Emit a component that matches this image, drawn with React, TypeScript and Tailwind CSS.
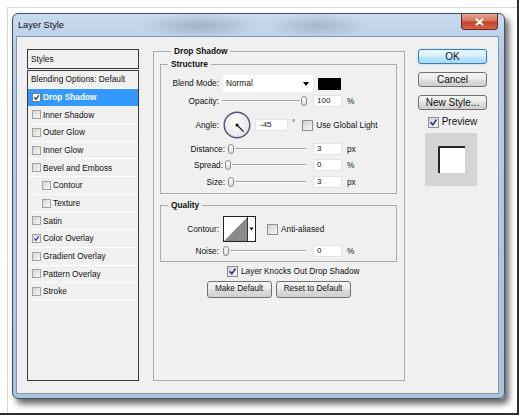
import React from "react";

const FONT = "font-['Liberation_Sans',Arial,sans-serif]";

function CheckMark({ color = "#22358f" }: { color?: string }) {
  return (
    <svg viewBox="0 0 10 10" className="block w-full h-full">
      <path d="M2.2 5.2 L4.2 7.6 L8 2.3" fill="none" stroke={color} strokeWidth="1.7" strokeLinecap="round" strokeLinejoin="round" />
    </svg>
  );
}

function SmallBox({ checked, white }: { checked?: boolean; white?: boolean }) {
  return (
    <span
      className={
        white
          ? "flex w-[9px] h-[9px] shrink-0 border border-[#7d7d7d] bg-white"
          : "flex w-[9px] h-[9px] shrink-0 border border-[#a2a2a2] bg-[linear-gradient(135deg,#d6d6d6,#f6f6f6)]"
      }
    >
      {checked && <CheckMark color={white ? "#1b2a6e" : "#2b45a8"} />}
    </span>
  );
}

function BigBox({ checked }: { checked?: boolean }) {
  return (
    <span className="flex w-[11px] h-[11px] shrink-0 border border-[#8e8e8e] bg-[linear-gradient(135deg,#d2d2d2,#f7f7f7)]">
      {checked && <CheckMark />}
    </span>
  );
}

function Thumb() {
  return <span className="block w-[6px] h-[10px] rounded-[3px] border border-[#8c8c8c] bg-[linear-gradient(#ffffff,#dcdcdc)]" />;
}

function Track() {
  return <span className="block flex-1 h-[2px] border-t border-[#a3a3a3] bg-white" />;
}

function Input({ v, w }: { v: string; w?: "wide" }) {
  return (
    <div
      className={
        w === "wide"
          ? "flex items-center w-[33px] h-[12px] bg-white border border-[#e3e3e3] pl-[4px] text-[8px] leading-none"
          : "flex items-center w-[29px] h-[12px] bg-white border border-[#e3e3e3] pl-[3px] text-[8px] leading-none"
      }
    >
      {v}
    </div>
  );
}

const items: { label: string; checked?: boolean; selected?: boolean; indent?: boolean; nobox?: boolean }[] = [
  { label: "Blending Options: Default", nobox: true },
  { label: "Drop Shadow", checked: true, selected: true },
  { label: "Inner Shadow" },
  { label: "Outer Glow" },
  { label: "Inner Glow" },
  { label: "Bevel and Emboss" },
  { label: "Contour", indent: true },
  { label: "Texture", indent: true },
  { label: "Satin" },
  { label: "Color Overlay", checked: true },
  { label: "Gradient Overlay" },
  { label: "Pattern Overlay" },
  { label: "Stroke" },
];

function StyleRow({ it }: { it: (typeof items)[number] }) {
  if (it.nobox) {
    return (
      <div className="flex items-center h-[17.7px] pl-[3px] border-b border-white text-[8.3px] leading-none">
        {it.label}
      </div>
    );
  }
  return (
    <div
      className={
        (it.selected
          ? "bg-[#3399ff] text-white font-bold "
          : "border-b border-white ") +
        (it.indent ? "pl-[14px] " : "pl-[4px] ") +
        "flex items-center gap-[2px] h-[17.7px] text-[8.3px] leading-none"
      }
    >
      <SmallBox checked={it.checked} white={it.selected} />
      <span>{it.label}</span>
    </div>
  );
}

function GrayButton({ children, w }: { children: React.ReactNode; w: string }) {
  return (
    <div
      className={
        w +
        " flex items-center justify-center rounded-[3px] border border-[#707070] bg-[linear-gradient(#f3f3f3_0%,#ebebeb_48%,#dddddd_52%,#d0d0d0_100%)] leading-none"
      }
    >
      {children}
    </div>
  );
}

const lbl = "text-[8.3px] leading-none text-right";

export default function App() {
  return (
    <div className={`w-[520px] h-[416px] bg-white text-[#111] ${FONT}`}>
      <div className="flex w-[519px] h-[415px] border-r-2 border-b-2 border-[#2e2e2e] pl-[7px] pt-[7px]">
        <div className="flex-1 border-t border-l border-[#d8d8d8] pl-[4px] pt-[5px]">
          {/* Window */}
          <div className="flex flex-col w-[493px] h-[386px] rounded-[6px] border border-[#45505e] shadow-[4px_5px_6px_rgba(0,0,0,0.6)] bg-[radial-gradient(ellipse_60px_12px_at_38%_3%,rgba(95,110,130,0.35),transparent),radial-gradient(ellipse_50px_12px_at_62%_3%,rgba(95,110,130,0.3),transparent),linear-gradient(#c8daee,#b7cce4_10%,#a9c1dc)]">
            {/* Title bar */}
            <div className="flex items-start justify-between h-[22px]">
              <span className="self-center pl-[5px] pt-[1px] text-[9.2px] leading-none text-[#111]">Layer Style</span>
              <div className="flex items-center justify-center w-[37px] h-[16px] mr-[6px] rounded-b-[4px] border border-t-0 border-[#6b2219] bg-[linear-gradient(#e8a595,#d6725e_45%,#c2442c_55%,#d4674c)]">
                <svg viewBox="0 0 10 8" className="w-[9px] h-[8px]">
                  <path d="M1.5 1 L8.5 7 M8.5 1 L1.5 7" stroke="#fff" strokeWidth="2" strokeLinecap="round" />
                </svg>
              </div>
            </div>
            {/* Client */}
            <div className="flex flex-1 ml-[3px] mr-[5px] mb-[4px] border border-[#8397b0] bg-[#f0f0f0] pl-[10px] pt-[12px]">
              {/* Left styles list */}
              <div className="flex flex-col w-[112px] shrink-0">
                <div className="flex items-center h-[20px] border border-[#3a3a3a] pl-[3px] text-[8.3px] leading-none">Styles</div>
                <div className="mt-[1px] h-[311px] border border-[#3a3a3a]">
                  {items.map((it) => (
                    <StyleRow key={it.label} it={it} />
                  ))}
                </div>
              </div>

              {/* Drop Shadow group */}
              <fieldset className="ml-[14px] -mt-[3px] w-[252px] h-[335px] shrink-0 border border-[#ababab] pl-[6px] pr-[7px]">
                <legend className="ml-[11px] px-[3px] text-[8.3px] font-bold leading-[10px]">Drop Shadow</legend>

                {/* Structure */}
                <fieldset className="mt-[3px] border border-[#ababab] pb-[5px]">
                  <legend className="ml-[7px] px-[3px] text-[8.3px] font-bold leading-[10px]">Structure</legend>
                  <div className="flex items-center mt-[6px] h-[17px]">
                    <span className={`${lbl} w-[58px]`}>Blend Mode:</span>
                    <div className="flex items-center justify-between ml-[4px] w-[90px] h-[17px] bg-white pl-[3px] pr-[4px] text-[8.3px] leading-none">
                      <span>Normal</span>
                      <svg viewBox="0 0 6 4" className="w-[6px] h-[4px]">
                        <path d="M0 0 H6 L3 4 Z" fill="#000" />
                      </svg>
                    </div>
                    <span className="ml-[5px] w-[23px] h-[12px] bg-black" />
                  </div>
                  <div className="flex items-center mt-[3px] h-[12px]">
                    <span className={`${lbl} w-[58px]`}>Opacity:</span>
                    <div className="flex items-center ml-[3px] w-[88px] h-[12px] gap-[1px] pr-[3px]">
                      <Track />
                      <Thumb />
                    </div>
                    <div className="ml-[3px]">
                      <Input v="100" />
                    </div>
                    <span className="ml-[5px] text-[8.3px] leading-none">%</span>
                  </div>
                  <div className="flex items-center mt-[4px] h-[28px]">
                    <span className={`${lbl} w-[58px]`}>Angle:</span>
                    <svg viewBox="0 0 28 28" className="ml-[4px] w-[28px] h-[28px]">
                      <defs>
                        <radialGradient id="dial" cx="45%" cy="40%" r="65%">
                          <stop offset="0%" stopColor="#ffffff" />
                          <stop offset="100%" stopColor="#e2e2e2" />
                        </radialGradient>
                      </defs>
                      <circle cx="14" cy="14" r="12.8" fill="url(#dial)" stroke="#55597c" strokeWidth="1.5" />
                      <line x1="14" y1="14" x2="20.6" y2="20.6" stroke="#1a1a1a" strokeWidth="1.3" />
                      <circle cx="14" cy="14" r="1.5" fill="#000" />
                    </svg>
                    <div className="ml-[4px]">
                      <Input v="-45" w="wide" />
                    </div>
                    <span className="ml-[4px] -mt-[4px] text-[8px] leading-none">°</span>
                    <span className="ml-[7px]">
                      <BigBox />
                    </span>
                    <span className="ml-[3px] text-[8.3px] leading-none">Use Global Light</span>
                  </div>
                  <div className="flex items-center mt-[4px] h-[12px]">
                    <span className={`${lbl} w-[64px]`}>Distance:</span>
                    <div className="flex items-center ml-[1px] w-[84px] h-[12px] pl-[2px] gap-[1px] pr-[4px]">
                      <Thumb />
                      <Track />
                    </div>
                    <div className="ml-[3px]">
                      <Input v="3" />
                    </div>
                    <span className="ml-[5px] text-[8.3px] leading-none">px</span>
                  </div>
                  <div className="flex items-center mt-[4px] h-[12px]">
                    <span className={`${lbl} w-[62px]`}>Spread:</span>
                    <div className="flex items-center ml-[1px] w-[86px] h-[12px] pl-[1px] gap-[1px] pr-[4px]">
                      <Thumb />
                      <Track />
                    </div>
                    <div className="ml-[3px]">
                      <Input v="0" />
                    </div>
                    <span className="ml-[5px] text-[8.3px] leading-none">%</span>
                  </div>
                  <div className="flex items-center mt-[5px] h-[12px]">
                    <span className={`${lbl} w-[64px]`}>Size:</span>
                    <div className="flex items-center ml-[1px] w-[84px] h-[12px] pl-[2px] gap-[1px] pr-[4px]">
                      <Thumb />
                      <Track />
                    </div>
                    <div className="ml-[3px]">
                      <Input v="3" />
                    </div>
                    <span className="ml-[5px] text-[8.3px] leading-none">px</span>
                  </div>
                </fieldset>

                {/* Quality */}
                <fieldset className="mt-[6px] border border-[#ababab] pb-[4px]">
                  <legend className="ml-[7px] px-[3px] text-[8.3px] font-bold leading-[10px]">Quality</legend>
                  <div className="flex items-center mt-[6px] h-[26px]">
                    <span className={`${lbl} w-[58px]`}>Contour:</span>
                    <svg viewBox="0 0 33 26" className="ml-[4px] w-[33px] h-[26px]">
                      <rect x="0.5" y="0.5" width="32" height="25" fill="#fff" stroke="#222" />
                      <polygon points="1,25 24.5,1 24.5,25" fill="#8a8a8a" />
                      <line x1="24.5" y1="1" x2="24.5" y2="25" stroke="#333" />
                      <path d="M26.5 11.5 H30.5 L28.5 14.5 Z" fill="#000" />
                    </svg>
                    <span className="ml-[11px]">
                      <BigBox />
                    </span>
                    <span className="ml-[3px] text-[8.3px] leading-none">Anti-aliased</span>
                  </div>
                  <div className="flex items-center mt-[3px] h-[12px]">
                    <span className={`${lbl} w-[58px]`}>Noise:</span>
                    <div className="flex items-center ml-[2px] w-[89px] h-[12px] pl-[2px] gap-[1px] pr-[4px]">
                      <Thumb />
                      <Track />
                    </div>
                    <div className="ml-[3px]">
                      <Input v="0" />
                    </div>
                    <span className="ml-[5px] text-[8.3px] leading-none">%</span>
                  </div>
                </fieldset>

                <div className="flex items-center mt-[4px] ml-[67px] h-[11px]">
                  <BigBox checked />
                  <span className="ml-[3px] text-[8.3px] leading-none">Layer Knocks Out Drop Shadow</span>
                </div>
                <div className="flex justify-center gap-[4px] mt-[4px]">
                  <GrayButton w="w-[65px] h-[17px] text-[8.2px]">Make Default</GrayButton>
                  <GrayButton w="w-[75px] h-[17px] text-[8.2px]">Reset to Default</GrayButton>
                </div>
              </fieldset>

              {/* Right buttons */}
              <div className="flex flex-col ml-[13px] w-[69px] shrink-0">
                <div className="flex items-center justify-center h-[15px] rounded-[3px] border border-[#3c7fb1] bg-[linear-gradient(#eaf6fd_0%,#d9f0fc_48%,#bee6fd_52%,#a7d9f5_100%)] shadow-[0_0_2px_#7ec4f0] text-[10px] leading-none">
                  OK
                </div>
                <div className="mt-[8px]">
                  <GrayButton w="w-[69px] h-[15px] text-[10px]">Cancel</GrayButton>
                </div>
                <div className="mt-[8px]">
                  <GrayButton w="w-[69px] h-[15px] text-[10px]">New Style...</GrayButton>
                </div>
                <div className="flex items-center justify-center gap-[3px] mt-[6px] h-[12px]">
                  <BigBox checked />
                  <span className="text-[10px] leading-none">Preview</span>
                </div>
                <div className="flex items-center justify-center mt-[5px] ml-[7px] w-[52px] h-[53px] bg-[#d4d4d4]">
                  <div className="w-[27px] h-[27px] bg-white border-t-2 border-l-2 border-[#262626] rounded-tl-[2px]" />
                </div>
              </div>
            </div>
          </div>
        </div>
      </div>
    </div>
  );
}
